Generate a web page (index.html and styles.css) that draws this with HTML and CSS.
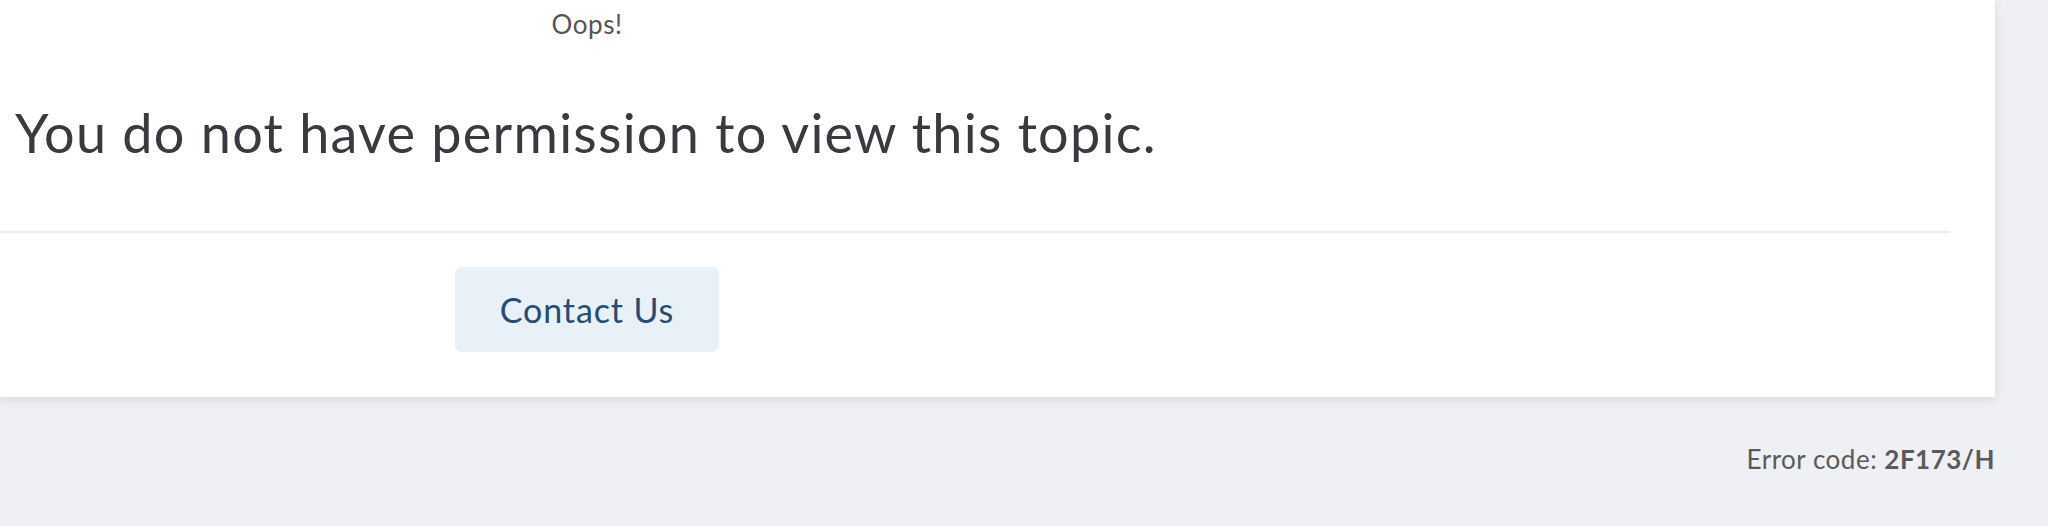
FILE: index.html
```html
<!DOCTYPE html>
<html lang="en">
<head>
  <meta charset="UTF-8">
  <meta name="viewport" content="width=device-width, initial-scale=1.0">
  <title>Oops!</title>
  <link rel="stylesheet" href="styles.css">
</head>
<body>
  <div class="page">
    <div class="card">
      <div class="message">
        <div class="oops">Oops!</div>
        <h1 class="title">You do not have permission to view this topic.</h1>
      </div>
      <hr class="divider">
      <div class="actions">
        <a class="contact" href="#">Contact Us</a>
      </div>
    </div>
    <div class="error-code">Error code: <strong>2F173/H</strong></div>
  </div>
</body>
</html>
```

FILE: styles.css
```css
body {
  margin: 0;
  background-color: #eff0f4;
  font-family: Lato, "Noto Sans", sans-serif;
  color: #3a3d42;
}

.page {
  width: 1995px;
}

.card {
  background: #fff;
  box-shadow: 0 3px 10px rgba(0, 0, 0, 0.09);
  padding: 0 45px 45px 0;
}

.message {
  width: 1174px;
  padding: 0 15px;
  box-sizing: border-box;
}

.oops {
  text-align: center;
  font-size: 26px;
  line-height: 48px;
  letter-spacing: 0.6px;
  color: #555;
}

.title {
  margin: 0;
  padding: 55px 0 68px;
  font-size: 54px;
  font-weight: 400;
  line-height: 60px;
  letter-spacing: 1.25px;
  color: #373a3f;
}

.divider {
  margin: 0;
  border: none;
  border-top: 2px solid #eeeeee;
}

.actions {
  width: 1174px;
  display: flex;
  justify-content: center;
  padding-top: 34px;
}

.contact {
  display: flex;
  align-items: center;
  justify-content: center;
  width: 264px;
  height: 85px;
  border-radius: 7px;
  background: #e8f0f8;
  color: #264b74;
  font-size: 34px;
  letter-spacing: 0.9px;
  text-decoration: none;
}

.error-code {
  text-align: right;
  padding-top: 46px;
  font-size: 26px;
  letter-spacing: 0.5px;
  color: #5a5a5a;
}

.error-code strong {
  font-weight: 700;
}
```
